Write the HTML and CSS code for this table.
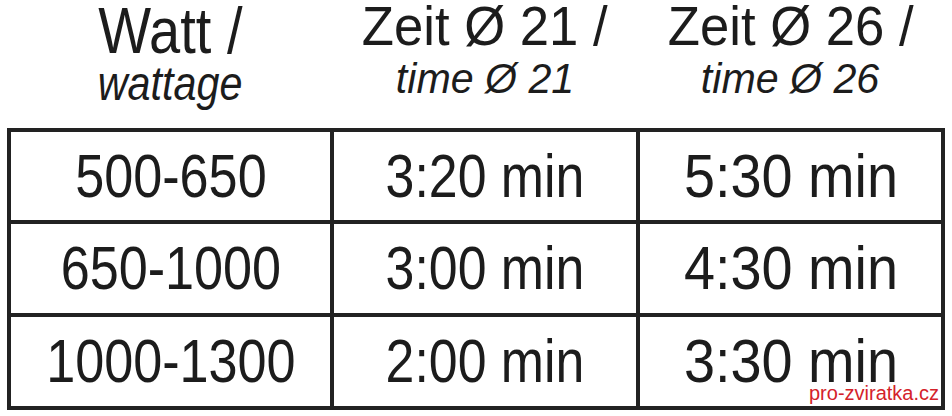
FILE: index.html
```html
<!DOCTYPE html>
<html lang="de">
<head>
<meta charset="utf-8">
<title>Watt / wattage</title>
<link rel="stylesheet" href="styles.css">
</head>
<body>
<div class="page">
  <div class="head">
    <div class="hcell hcell-watt">
      <span class="h1 h1-watt">Watt /</span>
      <span class="h2 h2-watt">wattage</span>
    </div>
    <div class="hcell">
      <span class="h1">Zeit Ø 21 /</span>
      <span class="h2">time Ø 21</span>
    </div>
    <div class="hcell">
      <span class="h1">Zeit Ø 26 /</span>
      <span class="h2">time Ø 26</span>
    </div>
  </div>
  <div class="table">
    <div class="cell"><span class="num">500-650</span></div>
    <div class="cell"><span class="time time-21">3:20 min</span></div>
    <div class="cell"><span class="time">5:30 min</span></div>
    <div class="cell"><span class="num">650-1000</span></div>
    <div class="cell"><span class="time time-21">3:00 min</span></div>
    <div class="cell"><span class="time">4:30 min</span></div>
    <div class="cell"><span class="num">1000-1300</span></div>
    <div class="cell"><span class="time time-21">2:00 min</span></div>
    <div class="cell"><span class="time">3:30 min</span></div>
  </div>
  <span class="mark">pro-zviratka.cz</span>
</div>
</body>
</html>
```
FILE: styles.css
```css
html, body {
  margin: 0;
  padding: 0;
  background: #ffffff;
}
body {
  width: 952px;
  height: 416px;
  overflow: hidden;
  font-family: "Liberation Sans", Arial, sans-serif;
  color: #1c1c1c;
}
.page {
  position: relative;
  width: 952px;
  height: 416px;
}
.head {
  display: grid;
  grid-template-columns: 319px 302px 301px;
  column-gap: 4px;
  margin-left: 7px;
  padding: 0 4px;
  height: 128px;
}
.hcell {
  display: flex;
  flex-direction: column;
  align-items: center;
}
.h1 {
  display: block;
  font-size: 56px;
  line-height: 51px;
  transform: scaleX(0.94);
  white-space: nowrap;
}
.h2 {
  display: block;
  font-size: 42px;
  line-height: 55px;
  font-style: italic;
  transform: scaleX(0.98);
  white-space: nowrap;
}
.h1-watt {
  font-size: 64px;
  line-height: 62px;
  transform: scaleX(0.875);
}
.h2-watt {
  font-size: 48px;
  line-height: 43px;
  transform: scaleX(0.86);
}
.table {
  display: grid;
  grid-template-columns: 319px 302px 301px;
  grid-template-rows: 88px 89px 89px;
  gap: 4px;
  padding: 4px;
  margin-left: 7px;
  width: 930px;
  background: #222222;
}
.cell {
  background: #ffffff;
  display: flex;
  align-items: center;
  justify-content: center;
}
.num, .time {
  display: inline-block;
  font-size: 61px;
  line-height: 61px;
  white-space: nowrap;
}
.num {
  transform: scaleX(0.855);
}
.time {
  transform: scaleX(0.915);
}
.time-21 {
  transform: scaleX(0.85);
}
.mark {
  position: absolute;
  left: 809px;
  top: 382px;
  font-size: 20px;
  line-height: 23px;
  color: #d4222a;
  white-space: nowrap;
}
```
